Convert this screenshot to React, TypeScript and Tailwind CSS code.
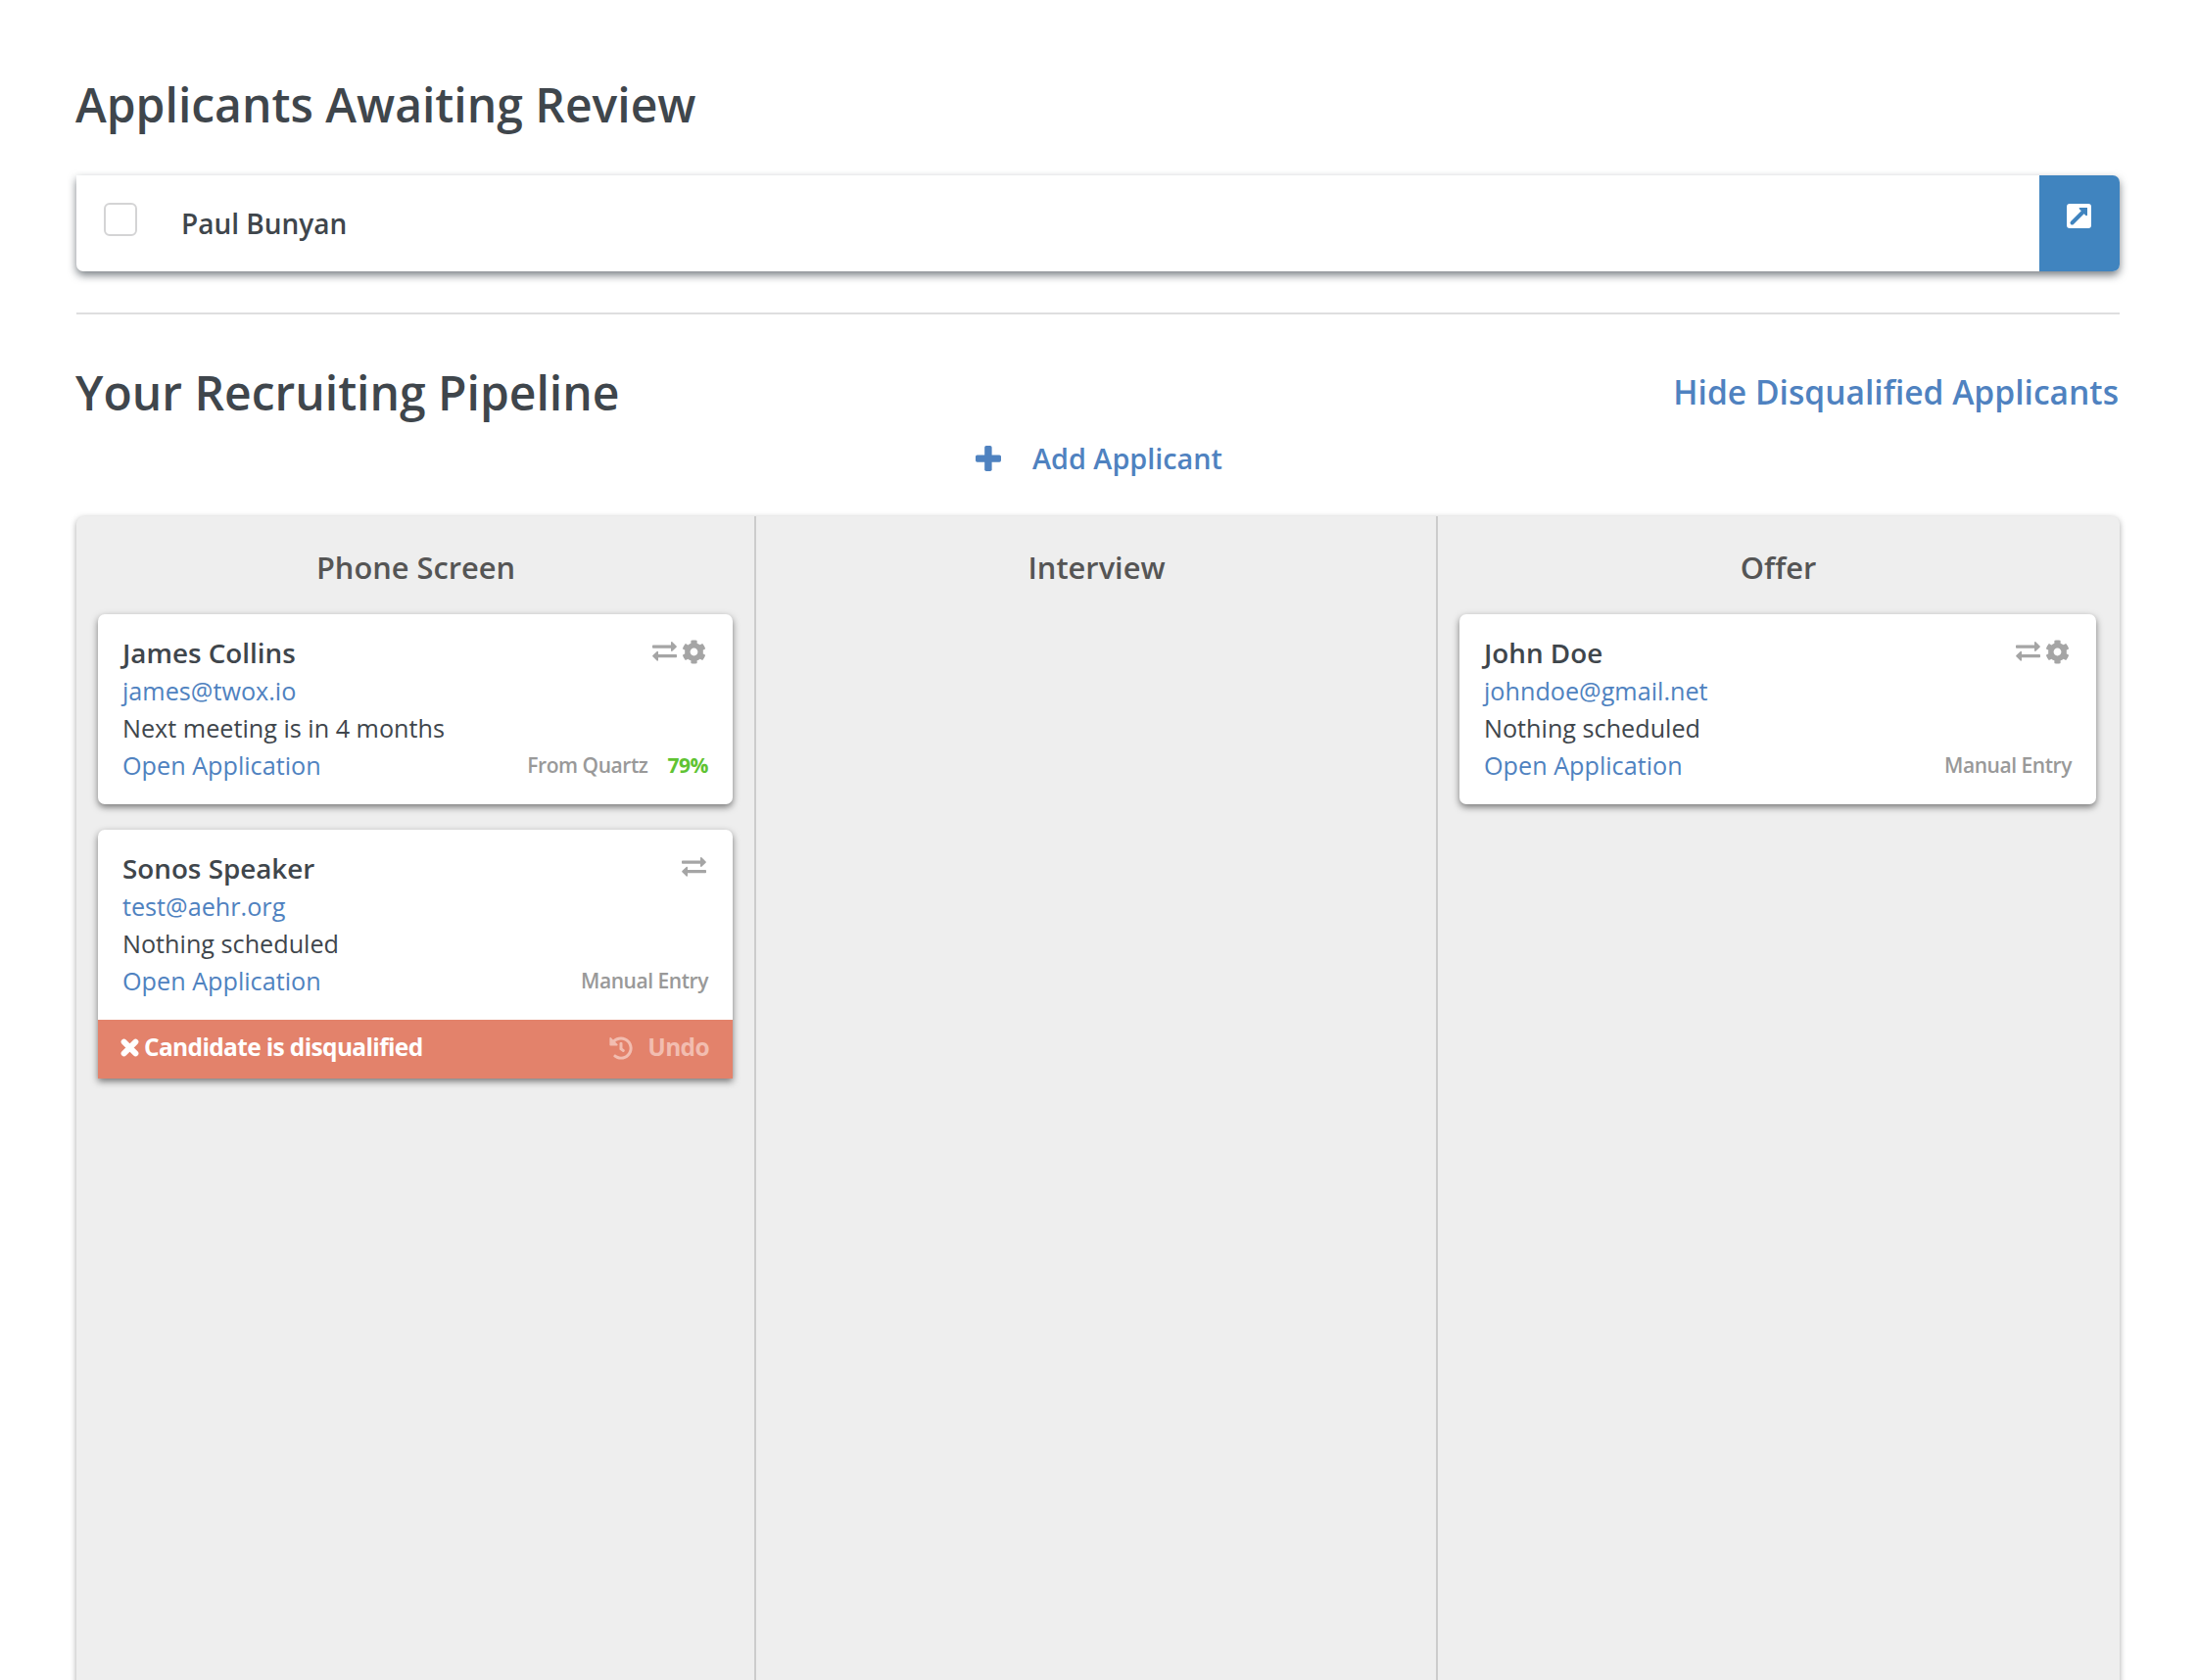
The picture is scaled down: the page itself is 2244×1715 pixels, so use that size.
import React from "react";
import { FaHistory, FaCog } from "react-icons/fa";

type Applicant = {
  name: string;
  email: string;
  status: string;
  source: string;
  score?: string;
  manageable?: boolean;
  disqualified?: boolean;
};

const stages: { title: string; applicants: Applicant[] }[] = [
  {
    title: "Phone Screen",
    applicants: [
      { name: "James Collins", email: "james@twox.io", status: "Next meeting is in 4 months", source: "From Quartz", score: "79%", manageable: true },
      { name: "Sonos Speaker", email: "test@aehr.org", status: "Nothing scheduled", source: "Manual Entry", disqualified: true },
    ],
  },
  { title: "Interview", applicants: [] },
  {
    title: "Offer",
    applicants: [{ name: "John Doe", email: "johndoe@gmail.net", status: "Nothing scheduled", source: "Manual Entry", manageable: true }],
  },
];

function Exchange() {
  return (
    <svg className="h-[20px] w-[25px]" viewBox="0 0 25 20" fill="currentColor">
      <path d="M.8 3.500H19V1c0-.9.7-1.200 1.300-.7l4.300 4.100c.4.400.4.900 0 1.300l-4.300 4c-.6.500-1.300.2-1.300-.7V6.700H.8c-.5 0-.8-.3-.8-.8V4.300c0-.5.300-.8.800-.8z" />
      <path d="M24.200 13H6v-2.400c0-.9-.7-1.200-1.300-.7L.4 14c-.4.400-.4.900 0 1.300l4.300 4.200c.6.500 1.300.2 1.300-.7v-2.600h18.200c.5 0 .8-.3.800-.8v-1.600c0-.5-.3-.8-.8-.8z" />
    </svg>
  );
}

function Plus() {
  return (
    <svg className="size-[26px]" viewBox="0 0 26 26" fill="currentColor">
      <rect x="9.200" width="7.400" height="26" rx="1.700" />
      <rect y="9.400" width="26" height="7.400" rx="1.700" />
    </svg>
  );
}

function Cross() {
  return (
    <svg className="-ml-px size-[19px]" viewBox="0 0 18 18" stroke="currentColor" strokeWidth="5.600" strokeLinecap="round">
      <path d="M3.400 3.400L14.600 14.600M14.600 3.400L3.400 14.600" />
    </svg>
  );
}

function Card({ a }: { a: Applicant }) {
  return (
    <article className={`rounded-t-[7px] bg-white shadow-[0_3px_7px_rgba(0,0,0,0.5)] ${a.disqualified ? "" : "rounded-b-[7px]"}`}>
      <div className="h-[194px] px-[25px] pt-[19px]">
        <div className="flex h-[40px] items-center justify-between">
          <h3 className="text-[27.800px] leading-[40px] font-semibold text-[#3f464c]">{a.name}</h3>
          <div className="mr-[2px] mb-[2px] flex items-center gap-[5px] text-[#a5a5a5]">
            <Exchange />
            {a.manageable && <FaCog className="size-[25px]" />}
          </div>
        </div>
        <a className="block text-[25.200px] leading-[38px] text-[#4f82c0]">{a.email}</a>
        <p className="text-[25.200px] leading-[38px] text-[#3f464c]">{a.status}</p>
        <div className="flex items-center justify-between leading-[38px]">
          <a className="text-[25.200px] text-[#4f82c0]">Open Application</a>
          <span className="flex gap-[20px] text-[21px] font-semibold tracking-[-0.450px] text-[#999]">
            {a.source}
            {a.score && <b className="font-bold text-[#5fc332]">{a.score}</b>}
          </span>
        </div>
      </div>
      {a.disqualified && (
        <div className="flex h-[60px] items-center justify-between bg-[#e3826b] px-[24px] pb-[3px] text-[24.500px] font-bold tracking-[-0.650px] text-white">
          <span className="flex items-center gap-[5px]">
            <Cross />
            Candidate is disqualified
          </span>
          <span className="flex items-center gap-[15px] text-[#f2bdb0]">
            <FaHistory className="size-[24px]" />
            Undo
          </span>
        </div>
      )}
    </article>
  );
}

export default function App() {
  return (
    <main className="flex h-[1715px] flex-col overflow-hidden bg-white pr-[80px] pl-[78px] font-['Open_Sans',sans-serif]">
      <h1 className="mt-[72px] -ml-px text-[48px] leading-[70px] font-semibold text-[#3f464c]">Applicants Awaiting Review</h1>
      <section className="mt-[37px] flex h-[98px] shrink-0 rounded-[7px] rounded-tl-none bg-white shadow-[0_4px_8px_rgba(33,44,52,0.6)]">
        <span className="mt-[28px] ml-[28px] size-[34px] rounded-[6px] border-2 border-[#d4d4d5]" />
        <span className="mt-[29px] ml-[45px] text-[28px] leading-[40px] font-semibold text-[#3f464c]">Paul Bunyan</span>
        <button className="ml-auto flex w-[82px] justify-center rounded-r-[7px] bg-[#4084bf] pt-[29px] pr-px text-white">
          <svg className="size-[25px]" viewBox="0 0 25 25">
            <rect width="25" height="25" rx="3" fill="currentColor" />
            <path d="M5.500 19.500L17.500 7.500" stroke="#4084bf" strokeWidth="4" strokeLinecap="round" />
            <path d="M13.500 4h7.500v7.500c0 1-1 1-1.600.4L13 5.500c-.6-.6-.5-1.500.5-1.500z" fill="#4084bf" />
          </svg>
        </button>
      </section>
      <hr className="mt-[42px] border-t-2 border-[#dededf]" />
      <div className="mt-[45px] flex h-[70px] items-center justify-between font-semibold">
        <h2 className="-ml-px text-[48px] leading-[70px] text-[#3f464c]">Your Recruiting Pipeline</h2>
        <a className="mr-px mb-[2px] text-[33.600px] text-[#4f82c0]">Hide Disqualified Applicants</a>
      </div>
      <div className="-mt-px flex h-[66px] items-center justify-center gap-[32px] pl-[2px] text-[28.800px] font-semibold text-[#4f82c0]">
        <Plus />
        Add Applicant
      </div>
      <div className="mt-[26px] flex min-h-0 grow">
        <div className="-mb-[20px] grid grow grid-cols-[694px_696px_696px] rounded-t-[8px] bg-[#eee] shadow-[0_2px_6px_rgba(0,0,0,0.35)]">
          {stages.map((s) => (
            <section key={s.title} className="flex flex-col gap-[26px] border-r-2 border-[#ccc] px-[22px] last:border-0 last:pr-[24px]">
              <h2 className="mt-[28px] -mb-[2px] pl-px text-center text-[30.800px] leading-[48px] font-semibold text-[#555]">{s.title}</h2>
              {s.applicants.map((a) => (
                <Card key={a.name} a={a} />
              ))}
            </section>
          ))}
        </div>
      </div>
    </main>
  );
}
